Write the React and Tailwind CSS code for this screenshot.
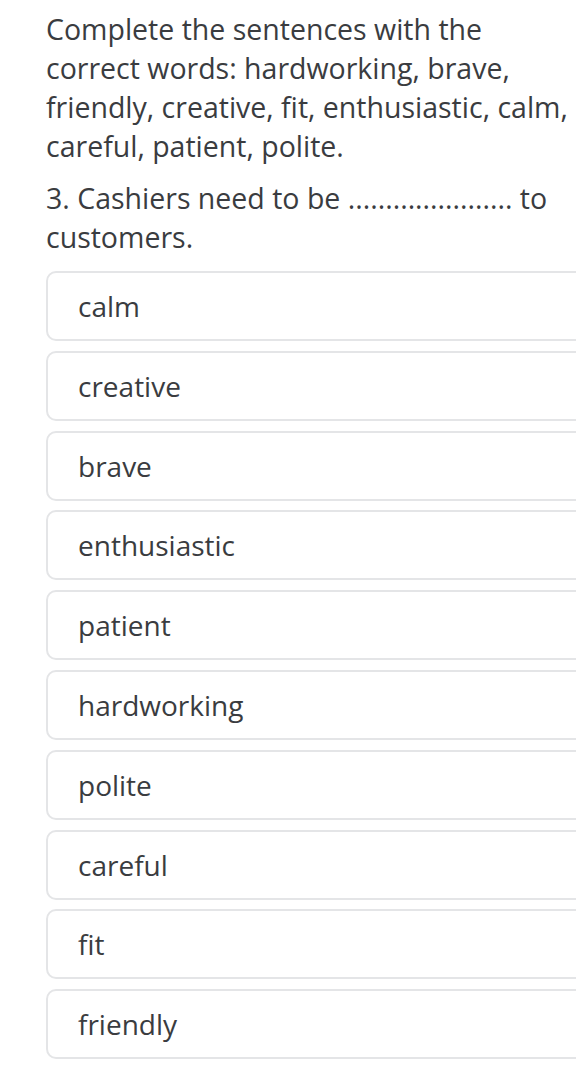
import React from 'react';

const options = ['calm', 'creative', 'brave', 'enthusiastic', 'patient', 'hardworking', 'polite', 'careful', 'fit', 'friendly'];

export default function App() {
  return (
    <div className="w-[576px] h-[1068px] overflow-hidden bg-white text-[#3a3c40]" style={{ fontFamily: '"Open Sans", sans-serif' }}>
      <div className="pl-[46px] pt-[10px] whitespace-nowrap">
        <p className="text-[28.5px] leading-[39px]">
          Complete the sentences with the<br />
          correct words: hardworking, brave,<br />
          friendly, creative, fit, enthusiastic, calm,<br />
          careful, patient, polite.
        </p>
        <p className="text-[28.5px] leading-[39px] mt-[13px]">
          3. Cashiers need to be ...................... to<br />
          customers.
        </p>
      </div>

      {/* OPTIONS */}
      <div className="pl-[46px] mt-[14px] flex flex-col gap-[9.8px]">
        {options.map((opt) => (
          <div
            key={opt}
            className="w-[560px] h-[70px] shrink-0 flex items-center pl-[30px] border-2 border-[#e4e5e7] rounded-[10px] bg-white text-[28px]"
          >
            {opt}
          </div>
        ))}
      </div>
    </div>
  );
}
